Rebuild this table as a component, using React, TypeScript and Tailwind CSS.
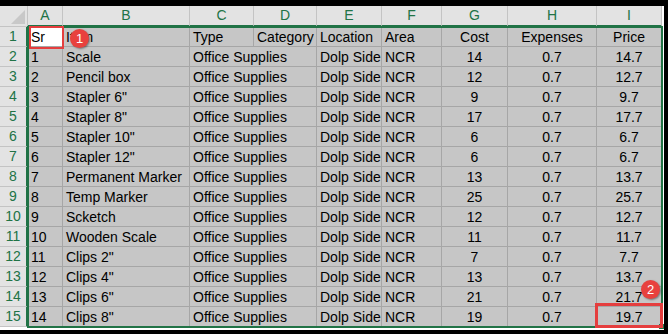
import React from "react";

const letters = ["A", "B", "C", "D", "E", "F", "G", "H", "I"];

const data: [number, string, number, number][] = [
  [1, "Scale", 14, 14.7],
  [2, "Pencil box", 12, 12.7],
  [3, 'Stapler 6"', 9, 9.7],
  [4, 'Stapler 8"', 17, 17.7],
  [5, 'Stapler 10"', 6, 6.7],
  [6, 'Stapler 12"', 6, 6.7],
  [7, "Permanent Marker", 13, 13.7],
  [8, "Temp Marker", 25, 25.7],
  [9, "Scketch", 12, 12.7],
  [10, "Wooden Scale", 11, 11.7],
  [11, 'Clips 2"', 7, 7.7],
  [12, 'Clips 4"', 13, 13.7],
  [13, 'Clips 6"', 21, 21.7],
  [14, 'Clips 8"', 19, 19.7],
];

const gridCols = "grid-cols-[28px_35px_127px_64px_63px_65px_60px_66px_89px_65px]";
const cell = "h-[20px] border-r border-b border-[#a6a6a6] flex items-center whitespace-nowrap leading-none pt-[1px] bg-[#c6c6c6]";
const rowHead =
  "h-[20px] bg-[#e3e3e3] border-r-2 border-r-[#217346] border-b border-b-[#c4c4c4] flex items-center justify-center text-[#217346]";

function Left({ children, active, span }: { children?: React.ReactNode; active?: boolean; span?: boolean }) {
  return (
    <div className={`${cell} pl-[3px] ${active ? "!bg-white" : ""} ${span ? "col-span-2" : ""}`}>{children}</div>
  );
}
function Mid({ children }: { children?: React.ReactNode }) {
  return <div className={`${cell} justify-center`}>{children}</div>;
}

export default function App() {
  return (
    <div
      className="w-[668px] h-[334px] bg-black pt-[6px] overflow-hidden"
      style={{ fontFamily: '"Liberation Sans", Arial, sans-serif' }}
    >
      <div className="relative w-[664px] h-[324px] bg-white overflow-hidden">
        <div className={`grid ${gridCols} text-[14px] text-black`}>
          <div className="h-[21px] bg-[#e3e3e3] border-r border-b border-[#c4c4c4] flex items-end justify-end p-[2px]">
            <svg width="14" height="14" viewBox="0 0 14 14">
              <polygon points="14,0 14,14 0,14" fill="#c8c8c8" />
            </svg>
          </div>
          {letters.map((l) => (
            <div
              key={l}
              className="h-[21px] bg-[#e3e3e3] border-r border-[#c4c4c4] border-b-2 border-b-[#217346] flex items-center justify-center text-[#217346]"
            >
              {l}
            </div>
          ))}

          <div className={rowHead}>1</div>
          <Left active>Sr</Left>
          <Left>Item</Left>
          <Left>Type</Left>
          <Left>Category</Left>
          <Left>Location</Left>
          <Left>Area</Left>
          <Mid>Cost</Mid>
          <Mid>Expenses</Mid>
          <Mid>Price</Mid>

          {data.map(([sr, item, cost, price], i) => (
            <React.Fragment key={sr}>
              <div className={rowHead}>{i + 2}</div>
              <Left>{sr}</Left>
              <Left>{item}</Left>
              <Left span>Office Supplies</Left>
              <Left>Dolp Side</Left>
              <Left>NCR</Left>
              <Mid>{cost}</Mid>
              <Mid>0.7</Mid>
              <Mid>{price}</Mid>
            </React.Fragment>
          ))}
        </div>

        {/* selection border */}
        <div className="absolute left-[27px] top-[20px] w-[636px] h-[302px] border-2 border-[#217346] pointer-events-none" />
        <div className="absolute left-[659px] top-[318px] w-[5px] h-[5px] bg-white border border-[#217346]" />

        {/* red annotation boxes */}
        <div className="absolute left-[29px] top-[20px] w-[35px] h-[23px] border-2 border-[#e53e3e] pointer-events-none" />
        <div className="absolute left-[595px] top-[297px] w-[68px] h-[25px] border-[3px] border-[#e53e3e] pointer-events-none" />

        {/* numbered markers */}
        <div className="absolute left-[70px] top-[23px] w-[19px] h-[19px] rounded-full bg-[#e8413e] flex items-center justify-center text-white text-[13px] shadow-[1px_1px_2px_rgba(0,0,0,0.4)]">
          1
        </div>
        <div className="absolute left-[641px] top-[274px] w-[19px] h-[19px] rounded-full bg-[#e8413e] flex items-center justify-center text-white text-[13px] shadow-[1px_1px_2px_rgba(0,0,0,0.4)]">
          2
        </div>
      </div>
    </div>
  );
}
